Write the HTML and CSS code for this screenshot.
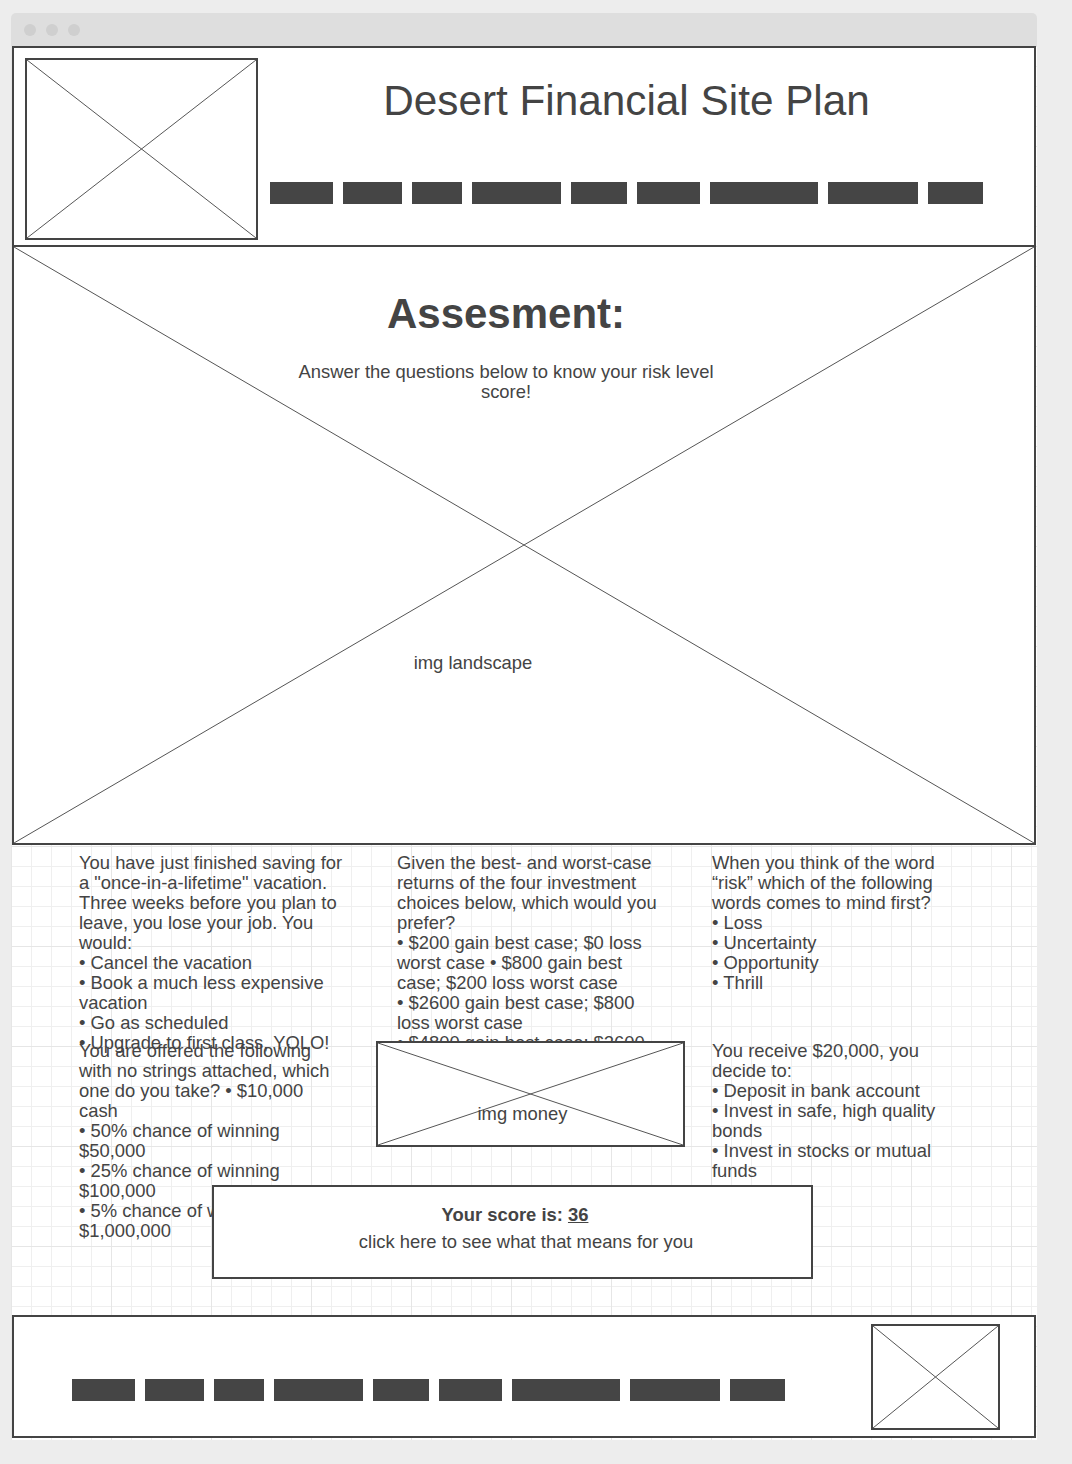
FILE: index.html
```html
<!DOCTYPE html>
<html lang="en">
<head>
  <meta charset="UTF-8">
  <title>Desert Financial Site Plan</title>
  <link rel="stylesheet" href="styles.css">
</head>
<body>
  <div class="window">
    <div class="titlebar">
      <span class="dot"></span><span class="dot"></span><span class="dot"></span>
    </div>

    <div class="page">
      <header class="header">
        <div class="placeholder logo">
          <svg class="cross" viewBox="0 0 100 100" preserveAspectRatio="none"><line x1="0" y1="0" x2="100" y2="100"/><line x1="100" y1="0" x2="0" y2="100"/></svg>
        </div>
        <div class="header-main">
          <div class="site-title">Desert Financial Site Plan</div>
          <nav class="nav">
            <span></span><span></span><span></span><span></span><span></span><span></span><span></span><span></span><span></span>
          </nav>
        </div>
      </header>

      <section class="hero">
        <svg class="cross" viewBox="0 0 100 100" preserveAspectRatio="none"><line x1="0" y1="0" x2="100" y2="100"/><line x1="100" y1="0" x2="0" y2="100"/></svg>
        <div class="hero-content">
          <h1>Assesment:</h1>
          <p class="intro">Answer the questions below to know your risk level score!</p>
        </div>
        <div class="hero-label">img landscape</div>
      </section>

      <section class="questions">
        <div class="q-grid">
          <div class="q q-wide">You have just finished saving for a "once-in-a-lifetime" vacation. Three weeks before you plan to leave, you lose your job. You would:<br>• Cancel the vacation<br>• Book a much less expensive vacation<br>• Go as scheduled<br>• Upgrade to first class, YOLO!</div>
          <div class="q q-wide">Given the best- and worst-case returns of the four investment choices below, which would you prefer?<br>• $200 gain best case; $0 loss worst case • $800 gain best case; $200 loss worst case<br>• $2600 gain best case; $800 loss worst case<br>• $4800 gain best case; $2600 loss worst case</div>
          <div class="q q-narrow">When you think of the word “risk” which of the following words comes to mind first?<br>• Loss<br>• Uncertainty<br>• Opportunity<br>• Thrill</div>

          <div class="q q-wide">You are offered the following with no strings attached, which one do you take? • $10,000 cash<br>• 50% chance of winning $50,000<br>• 25% chance of winning $100,000<br>• 5% chance of winning $1,000,000</div>
          <div class="placeholder money">
            <svg class="cross" viewBox="0 0 100 100" preserveAspectRatio="none"><line x1="0" y1="0" x2="100" y2="100"/><line x1="100" y1="0" x2="0" y2="100"/></svg>
            <span class="money-label">img money</span>
          </div>
          <div class="q q-narrow">You receive $20,000, you decide to:<br>• Deposit in bank account<br>• Invest in safe, high quality bonds<br>• Invest in stocks or mutual funds</div>
        </div>

        <div class="score">
          <div class="score-line">Your score is: <u>36</u></div>
          <div class="score-link">click here to see what that means for you</div>
        </div>
      </section>

      <footer class="footer">
        <nav class="nav">
          <span></span><span></span><span></span><span></span><span></span><span></span><span></span><span></span><span></span>
        </nav>
        <div class="placeholder footer-logo">
          <svg class="cross" viewBox="0 0 100 100" preserveAspectRatio="none"><line x1="0" y1="0" x2="100" y2="100"/><line x1="100" y1="0" x2="0" y2="100"/></svg>
        </div>
      </footer>
    </div>
  </div>
</body>
</html>
```

FILE: styles.css
```css
body {
  margin: 0;
  background: #ededed;
  font-family: "Liberation Sans", Arial, sans-serif;
  color: #444;
}

.window {
  margin: 13px 0 0 11px;
  width: 1026px;
}

.titlebar {
  height: 33px;
  background: #dedede;
  border-radius: 5px 5px 0 0;
  display: flex;
  align-items: center;
  gap: 10px;
  padding-left: 13px;
  box-sizing: border-box;
}

.dot {
  width: 12px;
  height: 12px;
  border-radius: 50%;
  background: #cfcfcf;
}

/* grid paper behind the wireframe */
.page {
  padding: 0 1px 2px;
  background-color: #fff;
  background-image:
    linear-gradient(to right, #e6e6e6 1px, transparent 1px),
    linear-gradient(to bottom, #e6e6e6 1px, transparent 1px),
    linear-gradient(to right, #efefef 1px, transparent 1px),
    linear-gradient(to bottom, #efefef 1px, transparent 1px);
  background-size: 100px 100px, 100px 100px, 20px 20px, 20px 20px;
}

.placeholder {
  position: relative;
  border: 2px solid #444;
  background: #fff;
  box-sizing: border-box;
}

.cross {
  position: absolute;
  left: 0;
  top: 0;
  width: 100%;
  height: 100%;
}

.cross line {
  stroke: #555;
  stroke-width: 1px;
  vector-effect: non-scaling-stroke;
}

.header {
  display: flex;
  height: 201px;
  box-sizing: border-box;
  border: 2px solid #444;
  background: #fff;
  padding: 10px 0 0 11px;
}

.logo {
  width: 233px;
  height: 182px;
  flex-shrink: 0;
}

.header-main {
  margin-left: 12px;
  width: 713px;
}

.site-title {
  margin-top: 19px;
  font-size: 42.3px;
  line-height: 48px;
  text-align: center;
}

.nav {
  display: flex;
  gap: 10px;
}

.header .nav {
  margin-top: 57px;
}

.nav span {
  height: 22px;
  background: #454545;
}

.nav span:nth-child(1) { width: 63px; }
.nav span:nth-child(2) { width: 59px; }
.nav span:nth-child(3) { width: 50px; }
.nav span:nth-child(4) { width: 89px; }
.nav span:nth-child(5) { width: 56px; }
.nav span:nth-child(6) { width: 63px; }
.nav span:nth-child(7) { width: 108px; }
.nav span:nth-child(8) { width: 90px; }
.nav span:nth-child(9) { width: 55px; }

.hero {
  position: relative;
  margin-top: -2px;
  height: 600px;
  box-sizing: border-box;
  border: 2px solid #444;
  background: #fff;
}

.hero-content {
  position: relative;
  padding: 43px 36px 0 0;
  text-align: center;
}

.hero h1 {
  margin: 0;
  font-size: 42px;
  line-height: 48px;
  font-weight: bold;
}

.intro {
  width: 440px;
  margin: 24px auto 0;
  font-size: 18.4px;
  line-height: 20px;
}

.hero-label {
  position: relative;
  margin-top: 251px;
  padding-right: 102px;
  text-align: center;
  font-size: 18.4px;
  line-height: 20px;
}

.questions {
  padding: 8px 0 36px 67px;
}

.q-grid {
  display: grid;
  grid-template-columns: 318px 315px 1fr;
  grid-template-rows: 188px 144px;
}

.q {
  font-size: 18.4px;
  line-height: 20px;
}

.q-wide {
  width: 265px;
}

.q-narrow {
  width: 245px;
}

.money {
  margin-left: -21px;
  width: 309px;
  height: 106px;
  text-align: center;
}

.money-label {
  position: relative;
  display: block;
  margin-top: 61px;
  padding-right: 16px;
  font-size: 18.4px;
  line-height: 20px;
}

.score {
  position: relative;
  margin-left: 133px;
  width: 601px;
  height: 94px;
  box-sizing: border-box;
  border: 2px solid #444;
  background: #fff;
  padding-top: 17px;
  text-align: center;
  font-size: 18.4px;
}

.score-line {
  font-weight: bold;
  line-height: 22px;
  padding-left: 5px;
}

.score-link {
  margin-top: 5px;
  line-height: 22px;
  padding-left: 27px;
}

.footer {
  display: flex;
  height: 123px;
  box-sizing: border-box;
  border: 2px solid #444;
  background: #fff;
  padding: 7px 34px 0 58px;
}

.footer .nav {
  margin-top: 55px;
}

.footer-logo {
  margin-left: auto;
  width: 129px;
  height: 106px;
}
```
